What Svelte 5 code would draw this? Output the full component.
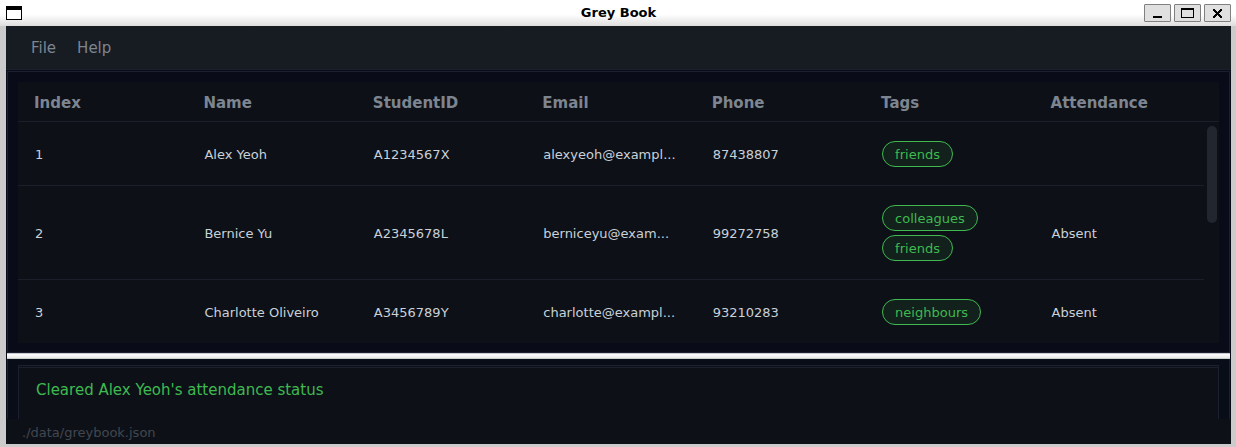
<script>
  const menus = ['File', 'Help'];
  const columns = ['Index', 'Name', 'StudentID', 'Email', 'Phone', 'Tags', 'Attendance'];
  const students = [
    { name: 'Alex Yeoh', id: 'A1234567X', email: 'alexyeoh@exampl...', phone: '87438807', tags: ['friends'], attendance: '' },
    { name: 'Bernice Yu', id: 'A2345678L', email: 'berniceyu@exam...', phone: '99272758', tags: ['colleagues', 'friends'], attendance: 'Absent' },
    { name: 'Charlotte Oliveiro', id: 'A3456789Y', email: 'charlotte@exampl...', phone: '93210283', tags: ['neighbours'], attendance: 'Absent' }
  ];
</script>

<div class="window">
  <header class="titlebar">
    <svg class="app-icon" width="16" height="14" viewBox="0 0 16 14" aria-hidden="true">
      <path d="M0 0h16v14H0z" fill="#000" />
      <path d="M1 4h14v9H1z" fill="#fff" />
    </svg>
    <h1>Grey Book</h1>
    <div class="controls">
      <button aria-label="Minimize">
        <svg width="25" height="16" viewBox="0 0 25 16"><path d="M8 11h9v2H8z" /></svg>
      </button>
      <button aria-label="Maximize">
        <svg width="25" height="16" viewBox="0 0 25 16"><path d="M6 3h13v10H6zM7 5v7h11V5z" fill-rule="evenodd" /></svg>
      </button>
      <button aria-label="Close">
        <svg width="25" height="16" viewBox="0 0 25 16"><path d="M8 4h2v1h1v1h1v1h1V6h1V5h1V4h2v2h-1v1h-1v1h-1v1h1v1h1v1h1v2h-2v-1h-1v-1h-1v-1h-1v1h-1v1h-1v1H8v-2h1v-1h1v-1h1V8h-1V7H9V6H8z" /></svg>
      </button>
    </div>
  </header>

  <div class="body">
    <nav>
      {#each menus as menu}
        <button>{menu}</button>
      {/each}
    </nav>

    <main>
      <section class="list">
        <table>
          <colgroup>
            {#each columns as _}<col />{/each}
            <col class="gutter" />
          </colgroup>
          <thead>
            <tr>
              {#each columns as column}<th scope="col">{column}</th>{/each}
              <td></td>
            </tr>
          </thead>
          <tbody>
            {#each students as student, i}
              <tr>
                <td>{i + 1}</td>
                <td>{student.name}</td>
                <td>{student.id}</td>
                <td>{student.email}</td>
                <td>{student.phone}</td>
                <td>
                  <div class="tags">
                    {#each student.tags as tag}<span>{tag}</span>{/each}
                  </div>
                </td>
                <td>{student.attendance}</td>
                {#if i === 0}
                  <td class="track" rowspan={students.length}><div class="thumb"></div></td>
                {/if}
              </tr>
            {/each}
          </tbody>
        </table>
      </section>
      <div class="divider"></div>
      <section class="result">
        <div class="message"><p>Cleared Alex Yeoh's attendance status</p></div>
      </section>
    </main>

    <footer>./data/greybook.json</footer>
  </div>
</div>

<style>
  :global(body) {
    margin: 0;
  }
  .window {
    box-sizing: border-box;
    min-height: 100vh;
    display: flex;
    flex-direction: column;
    background: #cbcbcb;
    font-family: "DejaVu Sans", sans-serif;
    font-size: 13px;
    color: #c9d1d9;
  }
  .titlebar {
    box-sizing: border-box;
    height: 26px;
    padding: 0 5px 0 6px;
    display: grid;
    grid-template-columns: 1fr auto 1fr;
    align-items: center;
    background: linear-gradient(#fff 55%, #dedede);
    color: #000;
  }
  h1 {
    margin: 0;
    font-size: 13px;
    line-height: 24px;
  }
  .controls {
    display: flex;
    justify-content: flex-end;
    gap: 3px;
  }
  .controls button {
    box-sizing: border-box;
    width: 27px;
    height: 18px;
    padding: 0;
    border: 1px solid #808080;
    border-radius: 1px;
    background: #e0e0e0;
  }
  .controls svg {
    display: block;
  }
  .body {
    flex: 1;
    margin: 0 5px 3px 6px;
    display: flex;
    flex-direction: column;
    background: #0d1117;
  }
  nav {
    height: 43px;
    padding: 0 15px;
    display: flex;
    align-items: center;
    gap: 1px;
    background: #171b22;
    border-bottom: 1px solid #1b202c;
  }
  nav button {
    padding: 0 10px;
    border: 0;
    background: none;
    font: 15px/20px "DejaVu Sans", sans-serif;
    color: #7d8590;
  }
  main {
    flex: 1;
    padding: 1px 1px 0;
    display: flex;
    flex-direction: column;
    background: #090c18;
  }
  .list {
    padding: 10px 10px 9px;
    border: 1px solid #1b1f2e;
  }
  table {
    width: 100%;
    table-layout: fixed;
    border-collapse: separate;
    border-spacing: 0;
    background: #0d1017;
  }
  .gutter {
    width: 15px;
  }
  th,
  td {
    padding: 0;
    text-align: left;
    white-space: nowrap;
    border-bottom: 1px solid #1b1f2a;
  }
  th {
    height: 37px;
    padding: 2px 0 0 16px;
    font-size: 15px;
    color: #7d8590;
  }
  tbody td {
    padding: 2px 0 0 17px;
  }
  tbody tr:last-child td,
  tbody .track {
    border-bottom: 0;
  }
  tbody .track {
    padding: 4px 2px 0 3px;
    vertical-align: top;
  }
  .thumb {
    height: 97px;
    border-radius: 5px;
    background: #22262e;
  }
  .tags {
    display: flex;
    flex-direction: column;
    align-items: flex-start;
    gap: 4px;
    padding: 17px 0 18px;
  }
  .tags span {
    padding: 1px 12px 0;
    border: 1px solid #3fb950;
    border-radius: 13px;
    background: #12211c;
    color: #3fb950;
    line-height: 23px;
  }
  .divider {
    height: 4px;
    border-top: 1px solid #c8c8d0;
    border-bottom: 1px solid #c8d0cc;
    background: linear-gradient(#fff, #e8e8e8);
  }
  .result {
    flex: 1;
    padding: 6px 10px 0;
    display: flex;
    border: solid #1b1f2e;
    border-width: 0 1px;
    background: #090d18;
  }
  .message {
    flex: 1;
    padding-top: 1px;
    border: 1px solid #1b1f2e;
    border-bottom: 0;
    background: #0d1117;
  }
  .message p {
    margin: 0;
    padding: 12px 17px 18px;
    border-top: 1px solid #1b1f2e;
    font-size: 15px;
    line-height: 20px;
    color: #3fb950;
  }
  footer {
    padding: 4px 16px 1px;
    line-height: 20px;
    color: #42474f;
  }
</style>
